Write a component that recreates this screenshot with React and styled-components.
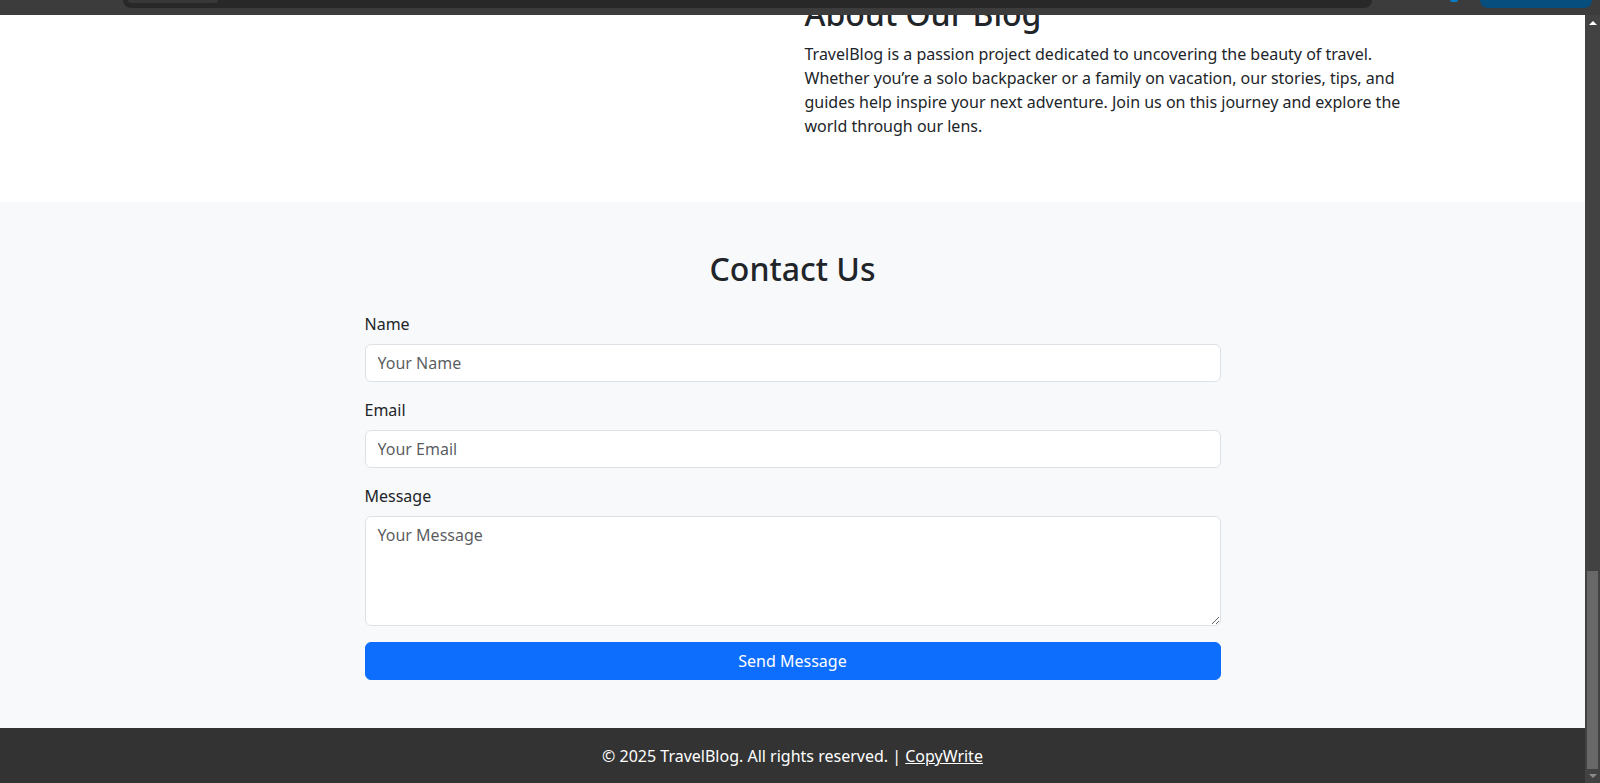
import React from 'react'
import styled, { createGlobalStyle } from 'styled-components';

const GlobalStyle = createGlobalStyle`
  html, body {
    margin: 0;
    padding: 0;
    overflow: hidden;
  }
  body {
    font-family: 'Noto Sans', 'Open Sans', sans-serif;
    font-size: 16px;
    line-height: 1.5;
    color: #212529;
    background: #fff;
  }
  * { box-sizing: border-box; }
`;

function App() {
  return (
    <>
      <GlobalStyle />
      <Page>
        <TopStrip>
          <AddressBar>
            <AddressChip />
          </AddressBar>
          <BlueDot />
          <BlueButton />
        </TopStrip>

        <Body>
          <Viewport>
            <Content>
              <AboutSection>
                <Container>
                  <Row>
                    <Col />
                    <Col>
                      <Heading>About Our Blog</Heading>
                      <Text>
                        TravelBlog is a passion project dedicated to uncovering the beauty of travel.
                        Whether you’re a solo backpacker or a family on vacation, our stories, tips, and
                        guides help inspire your next adventure. Join us on this journey and explore the
                        world through our lens.
                      </Text>
                    </Col>
                  </Row>
                </Container>
              </AboutSection>

              <ContactSection>
                <Container>
                  <Heading center spaced>Contact Us</Heading>
                  <Form onSubmit={e => e.preventDefault()}>
                    <Field>
                      <Label htmlFor="name">Name</Label>
                      <Input id="name" type="text" placeholder="Your Name" />
                    </Field>
                    <Field>
                      <Label htmlFor="email">Email</Label>
                      <Input id="email" type="email" placeholder="Your Email" />
                    </Field>
                    <Field>
                      <Label htmlFor="message">Message</Label>
                      <TextArea id="message" rows={4} placeholder="Your Message" />
                    </Field>
                    <SendButton type="submit">Send Message</SendButton>
                  </Form>
                </Container>
              </ContactSection>

              <Footer>
                © 2025 TravelBlog. All rights reserved. | <FooterLink href="#">CopyWrite</FooterLink>
              </Footer>
            </Content>
          </Viewport>

          <ScrollBar>
            <ArrowButton>
              <Arrow up />
            </ArrowButton>
            <Track>
              <Thumb />
            </Track>
            <ArrowButton small>
              <Arrow />
            </ArrowButton>
          </ScrollBar>
        </Body>
      </Page>
    </>
  )
}

export default App

const Page = styled.div`
  width: 1600px;
  height: 783px;
  display: flex;
  flex-direction: column;
  overflow: hidden;
`;

const TopStrip = styled.div`
  flex: 0 0 15px;
  background: #3c3c3c;
  display: flex;
  align-items: flex-start;
  padding-left: 123px;
`;

const AddressBar = styled.div`
  width: 1249px;
  height: 8px;
  background: #282828;
  border-radius: 0 0 9px 9px;
  padding-left: 5px;
`;

const AddressChip = styled.div`
  width: 90px;
  height: 3px;
  background: #383838;
  border-radius: 0 0 5px 5px;
`;

const BlueDot = styled.div`
  width: 8px;
  height: 2px;
  margin-left: 78px;
  background: #0a7bc4;
  border-radius: 0 0 4px 4px;
`;

const BlueButton = styled.div`
  width: 112px;
  height: 8px;
  margin-left: 22px;
  background: #064e7e;
  border-radius: 0 0 10px 10px;
`;

const Body = styled.div`
  flex: 1;
  display: flex;
  min-height: 0;
`;

const Viewport = styled.div`
  flex: 1;
  display: flex;
  flex-direction: column;
  justify-content: flex-end;
  overflow: hidden;
`;

const Content = styled.div`
  flex-shrink: 0;
`;

const Container = styled.div`
  width: 1320px;
  margin: 0 auto;
  padding: 0 12px;
`;

const Row = styled.div`
  display: flex;
  margin: 0 -12px;
`;

const Col = styled.div`
  flex: 0 0 50%;
  padding: 0 12px;
`;

const AboutSection = styled.section`
  background: #fff;
  padding: 48px 0;
`;

const Heading = styled.h2`
  margin: 0 0 ${p => (p.spaced ? '24px' : '8px')};
  font-size: 32px;
  font-weight: 500;
  line-height: 1.2;
  color: #212529;
  text-align: ${p => (p.center ? 'center' : 'left')};
`;

const Text = styled.p`
  margin: 0 0 16px;
`;

const ContactSection = styled.section`
  background: #f8f9fa;
  padding: 48px 0;
`;

const Form = styled.form`
  width: 856px;
  margin: 0 auto;
`;

const Field = styled.div`
  margin-bottom: 16px;
`;

const Label = styled.label`
  display: block;
  margin-bottom: 8px;
`;

const controlStyles = `
  display: block;
  width: 100%;
  padding: 6px 12px;
  font-family: 'Noto Sans', 'Open Sans', sans-serif;
  font-size: 16px;
  line-height: 1.5;
  color: #212529;
  background: #fff;
  border: 1px solid #dee2e6;
  border-radius: 6px;
  outline: none;
  &::placeholder {
    color: rgba(33, 37, 41, 0.75);
  }
`;

const Input = styled.input`
  ${controlStyles}
  height: 38px;
`;

const TextArea = styled.textarea`
  ${controlStyles}
  height: 110px;
  resize: vertical;
`;

const SendButton = styled.button`
  display: block;
  width: 100%;
  height: 38px;
  padding: 6px 12px;
  font-family: 'Noto Sans', 'Open Sans', sans-serif;
  font-size: 16px;
  line-height: 1.5;
  color: #fff;
  background: #0d6efd;
  border: 1px solid #0d6efd;
  border-radius: 6px;
  cursor: pointer;
`;

const Footer = styled.footer`
  background: #333;
  color: #fff;
  text-align: center;
  padding: 16px 0 15px;
`;

const FooterLink = styled.a`
  color: #fff;
  text-decoration: underline;
`;

const ScrollBar = styled.div`
  flex: 0 0 15px;
  background: #424242;
  display: flex;
  flex-direction: column;
`;

const ArrowButton = styled.div`
  flex: 0 0 ${p => (p.small ? '14px' : '15px')};
  display: flex;
  align-items: center;
  justify-content: center;
`;

const Arrow = styled.div`
  width: 0;
  height: 0;
  border-left: 4px solid transparent;
  border-right: 4px solid transparent;
  ${p => p.up
    ? 'border-bottom: 4px solid #ffffff;'
    : 'border-top: 4px solid #8a8a8a;'}
`;

const Track = styled.div`
  flex: 1;
  display: flex;
  flex-direction: column;
  justify-content: flex-end;
  padding: 0 2px;
`;

const Thumb = styled.div`
  height: 198px;
  background: #686868;
`;
